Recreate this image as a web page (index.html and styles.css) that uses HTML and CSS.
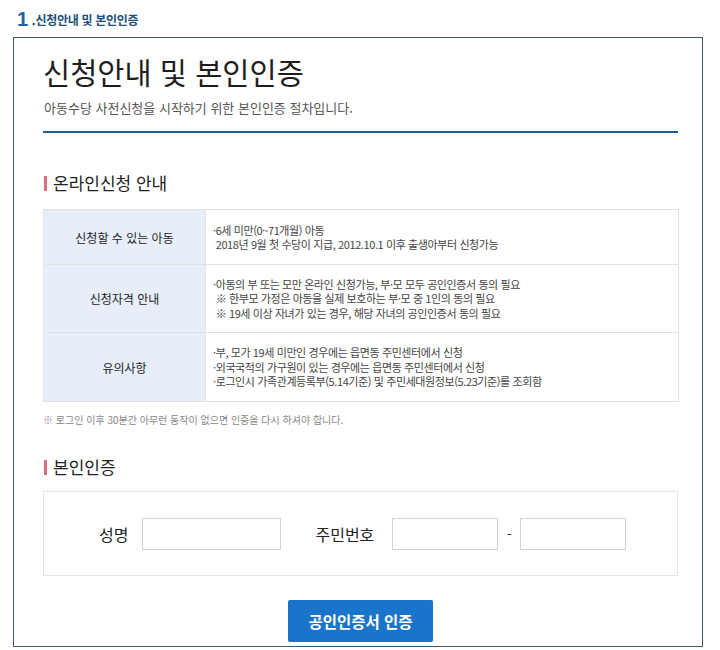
FILE: index.html
```html
<!DOCTYPE html>
<html lang="ko">
<head>
    <meta charset="UTF-8">
    <meta name="viewport" content="width=device-width, initial-scale=1.0">
    <title>신청안내 및 본인인증</title>
    <link rel="stylesheet" href="styles.css">
</head>
<body>
    <h2 class="step-title"><span class="step-num">1</span>.신청안내 및 본인인증</h2>

    <div class="frame">
        <div class="page-head">
            <h1>신청안내 및 본인인증</h1>
            <p>아동수당 사전신청을 시작하기 위한 본인인증 절차입니다.</p>
        </div>

        <h3 class="sec-title">온라인신청 안내</h3>
        <table class="info-table">
            <tr>
                <th>신청할 수 있는 아동</th>
                <td>
                    ·6세 미만(0~71개월) 아동<br>
                    &nbsp;2018년 9월 첫 수당이 지급, 2012.10.1 이후 출생아부터 신청가능
                </td>
            </tr>
            <tr>
                <th>신청자격 안내</th>
                <td>
                    ·아동의 부 또는 모만 온라인 신청가능, 부·모 모두 공인인증서 동의 필요<br>
                    &nbsp;※ 한부모 가정은 아동을 실제 보호하는 부·모 중 1인의 동의 필요<br>
                    &nbsp;※ 19세 이상 자녀가 있는 경우, 해당 자녀의 공인인증서 동의 필요
                </td>
            </tr>
            <tr>
                <th>유의사항</th>
                <td>
                    ·부, 모가 19세 미만인 경우에는 읍면동 주민센터에서 신청<br>
                    ·외국국적의 가구원이 있는 경우에는 읍면동 주민센터에서 신청<br>
                    ·로그인시 가족관계등록부(5.14기준) 및 주민세대원정보(5.23기준)를 조회함
                </td>
            </tr>
        </table>
        <p class="note">※ 로그인 이후 30분간 아무런 동작이 없으면 인증을 다시 하셔야 합니다.</p>

        <h3 class="sec-title sec-auth">본인인증</h3>
        <div class="auth-box">
            <label class="auth-label" for="userName">성명</label>
            <input type="text" id="userName" class="field field-name">
            <label class="auth-label label-rrn" for="rrn1">주민번호</label>
            <input type="text" id="rrn1" class="field field-rrn">
            <span class="dash">-</span>
            <input type="password" id="rrn2" class="field field-rrn">
        </div>

        <div class="btn-row">
            <button class="btn-cert">공인인증서 인증</button>
        </div>
    </div>
</body>
</html>
```

FILE: styles.css
```css
body {
    margin: 0;
    padding: 8px 0 0 13px;
    font-family: "Noto Sans CJK KR", "Noto Sans", sans-serif;
    color: #222;
    background: #fff;
}

.step-title {
    margin: 0 0 6px 4px;
    font-size: 12px;
    font-weight: bold;
    color: #1d4f7a;
    line-height: 22px;
    letter-spacing: -0.3px;
}

.step-num {
    font-size: 20px;
    color: #1f64a0;
    margin-right: 4px;
    font-family: "Liberation Sans", sans-serif;
    vertical-align: -1px;
}

.frame {
    width: 690px;
    height: 610px;
    border: 1px solid #3e5a6b;
    padding: 0 24px 0 29px;
    box-sizing: border-box;
}

.page-head {
    border-bottom: 2px solid #1c5f95;
    padding: 11px 0 13px 0;
}

.page-head h1 {
    margin: 0;
    font-size: 29.5px;
    font-weight: normal;
    line-height: 44px;
    color: #1e1e1e;
}

.page-head p {
    margin: 5px 0 0 1px;
    font-size: 13px;
    color: #555;
    line-height: 20px;
}

.sec-title {
    margin: 38px 0 14px 0;
    padding-left: 10px;
    position: relative;
    font-size: 17px;
    font-weight: normal;
    line-height: 24px;
    color: #222;
}

.sec-title::before {
    content: "";
    position: absolute;
    left: 1px;
    top: 5px;
    width: 3px;
    height: 15px;
    background: #d9707e;
}

.sec-auth {
    margin-top: 27px;
    margin-bottom: 12px;
}

.info-table {
    width: 636px;
    border-collapse: collapse;
    font-size: 11px;
    color: #444;
    margin-top: 1px;
}

.info-table th,
.info-table td {
    border: 1px solid #e2e2e2;
}

.info-table th {
    width: 159px;
    background: #e7eefa;
    font-size: 12px;
    font-weight: normal;
    color: #222;
}

.info-table td {
    padding: 0 7px;
    line-height: 14.5px;
    letter-spacing: -0.4px;
}

.info-table tr:nth-child(1) { height: 55px; }
.info-table tr:nth-child(2) { height: 68px; }
.info-table tr:nth-child(3) { height: 69px; }

.note {
    margin: 10px 0 0 0;
    font-size: 10px;
    color: #888;
    line-height: 16px;
}

.auth-box {
    border: 1px solid #e5e5e5;
    height: 85px;
    box-sizing: border-box;
    display: flex;
    align-items: center;
    padding-left: 55px;
}

.auth-label {
    font-size: 16px;
    color: #222;
    margin-right: 14px;
}

.label-rrn {
    margin-left: 34px;
    margin-right: 18px;
}

.field {
    height: 32px;
    border: 1px solid #d2d2d2;
    box-sizing: border-box;
    padding: 0 6px;
}

.field-name {
    width: 139px;
}

.field-rrn {
    width: 106px;
}

.dash {
    width: 22px;
    text-align: center;
    font-size: 14px;
    color: #333;
}

.btn-row {
    display: flex;
    justify-content: center;
    margin-top: 24px;
}

.btn-cert {
    width: 145px;
    height: 42px;
    border: none;
    border-radius: 2px;
    background: #1a74c9;
    color: #fff;
    font-family: "Noto Sans CJK KR", sans-serif;
    font-size: 15.5px;
    font-weight: bold;
}
```
